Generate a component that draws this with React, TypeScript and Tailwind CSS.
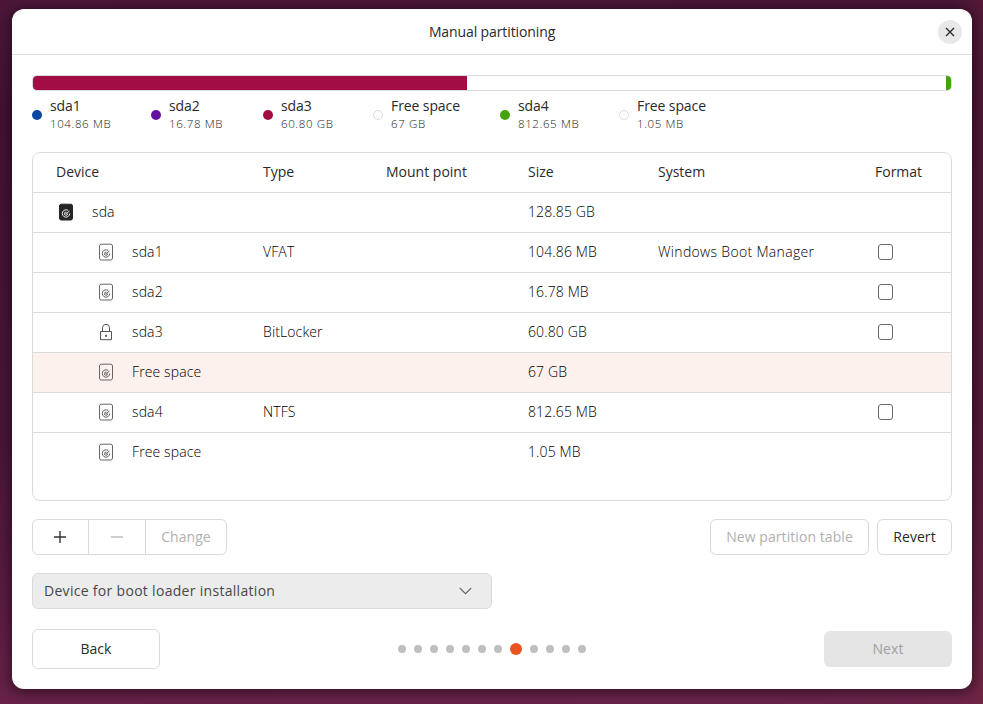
import React from "react";

const legend = [
  { name: "sda1", size: "104.86 MB", dot: "bg-[#0e46a3]", width: "w-[119px]" },
  { name: "sda2", size: "16.78 MB", dot: "bg-[#6610a0]", width: "w-[112px]" },
  { name: "sda3", size: "60.80 GB", dot: "bg-[#a30d46]", width: "w-[110px]" },
  { name: "Free space", size: "67 GB", dot: "border border-[#dadada] bg-white", width: "w-[127px]" },
  { name: "sda4", size: "812.65 MB", dot: "bg-[#46a30e]", width: "w-[119px]" },
  { name: "Free space", size: "1.05 MB", dot: "border border-[#dadada] bg-white", width: "w-[119px]" },
];

type Row = {
  icon: "disk" | "part" | "lock";
  name: string;
  type?: string;
  size: string;
  system?: string;
  format?: boolean;
  selected?: boolean;
};

const rows: Row[] = [
  { icon: "disk", name: "sda", size: "128.85 GB" },
  { icon: "part", name: "sda1", type: "VFAT", size: "104.86 MB", system: "Windows Boot Manager", format: true },
  { icon: "part", name: "sda2", size: "16.78 MB", format: true },
  { icon: "lock", name: "sda3", type: "BitLocker", size: "60.80 GB", format: true },
  { icon: "part", name: "Free space", size: "67 GB", selected: true },
  { icon: "part", name: "sda4", type: "NTFS", size: "812.65 MB", format: true },
  { icon: "part", name: "Free space", size: "1.05 MB" },
];

const grid = "grid grid-cols-[207px_123px_142px_130px_217px_1fr] pl-[23px] items-center";

function DriveIcon({ filled }: { filled?: boolean }) {
  const ink = filled ? "#fff" : "#505050";
  return (
    <svg width="20" height="20" viewBox="0 0 20 20" fill="none">
      <rect x="3.5" y="2.2" width="13" height="15.8" rx="1.8" fill={filled ? "#262626" : "none"} stroke={filled ? "#262626" : "#666"} strokeWidth="1" />
      <path d="M12.2 8.5 A3.7 3.7 0 1 0 13.7 11.5" stroke={ink} strokeWidth="0.9" />
      <path d="M11.6 11.6 A1.6 1.6 0 1 1 10.6 10.2 M9.6 11.5 H10.5 L13.4 9.1" stroke={ink} strokeWidth="0.9" />
    </svg>
  );
}

function LockIcon() {
  return (
    <svg width="20" height="20" viewBox="0 0 20 20" fill="none" stroke="#555" strokeWidth="1">
      <path d="M4.5 9.5 H15.5 V17.7 H4.5 Z" />
      <path d="M6.5 9.5 V5.8 A3.5 3.5 0 0 1 13.5 5.8 V9.5" />
      <rect x="9.3" y="12.8" width="1.5" height="2" fill="#333" stroke="none" />
    </svg>
  );
}

export default function App() {
  return (
    <div className="h-[704px] w-[983px] overflow-hidden bg-[linear-gradient(to_right,transparent_97%,rgba(125,45,50,0.2)),linear-gradient(178deg,#4d1639_0%,#431233_15%,#4a1538_60%,#5d1d43_85%,#6c2449_100%)] pl-3 pt-[9px] font-['Open_Sans','Noto_Sans',sans-serif] text-[14px] text-[#2a2a2a]">
      <div className="flex h-[680px] w-[960px] flex-col rounded-xl bg-white shadow-[0_2px_12px_2px_rgba(0,0,0,0.45)]">
        <header className="grid h-[46px] shrink-0 grid-cols-[1fr_auto_1fr] items-center border-b border-[#dedede] px-2.5">
          <span />
          <h1 className="pb-px tracking-[-0.11px]">Manual partitioning</h1>
          <button className="grid size-6 place-items-center justify-self-end rounded-full bg-[#e8e8e8]">
            <svg width="10" height="10" viewBox="0 0 10 10" stroke="#222" strokeWidth="1.2">
              <path d="M1 1 L9 9 M9 1 L1 9" />
            </svg>
          </button>
        </header>

        <main className="flex flex-1 flex-col px-5 pt-5">
          <div className="flex h-4 shrink-0 overflow-hidden rounded-[5px] border border-[#dadada]">
            <div className="w-[434px] bg-[#a30d46]" />
            <div className="flex-1" />
            <div className="w-[5px] bg-[#46a30e]" />
          </div>

          <div className="flex h-[61px] shrink-0 pt-[7px]">
            {legend.map((item, i) => (
              <div key={i} className={`flex h-[34px] items-center gap-2 ${item.width}`}>
                <span className={`size-2.5 rounded-full ${item.dot}`} />
                <div className="flex flex-col whitespace-nowrap">
                  <span className="h-[18px] leading-[16px] tracking-[-0.1px]">{item.name}</span>
                  <span className="h-[17px] text-[11.5px] font-light leading-[16px] tracking-[0.62px] text-[#222]">{item.size}</span>
                </div>
              </div>
            ))}
          </div>

          <section className="h-[349px] shrink-0 overflow-hidden rounded-lg border border-[#dadada]">
            <div className={`${grid} h-10 border-b border-[#dadada] pb-0.5 tracking-[0px]`}>
              <span>Device</span>
              <span>Type</span>
              <span>Mount point</span>
              <span>Size</span>
              <span>System</span>
              <span>Format</span>
            </div>
            {rows.map((row, i) => (
              <div
                key={i}
                className={`${grid} h-10 border-b pb-px font-light tracking-[0.12px] text-black ${i < rows.length - 1 ? "border-[#dadada]" : "border-transparent"} ${row.selected ? "bg-[#fdf1ed]" : ""}`}
              >
                <div className={`flex items-center gap-4 ${row.icon === "disk" ? "" : "pl-10"}`}>
                  {row.icon === "lock" ? <LockIcon /> : <DriveIcon filled={row.icon === "disk"} />}
                  <span className="pb-px">{row.name}</span>
                </div>
                <span className="pb-px">{row.type}</span>
                <span />
                <span className="pb-px">{row.size}</span>
                <span className="pb-px tracking-[0.32px]">{row.system}</span>
                {row.format ? <span className="ml-[3px] h-4 w-[15px] rounded-[3px] border border-[#6a6a6a]" /> : <span />}
              </div>
            ))}
          </section>

          <div className="mt-[18px] flex h-9 shrink-0 justify-between">
            <div className="flex w-[195px] divide-x divide-[#dadada] rounded-md border border-[#dadada]">
              <button className="grid w-14 place-items-center pr-px">
                <svg width="12" height="12" viewBox="0 0 12 12" stroke="#333" strokeWidth="1.4">
                  <path d="M0 6 H12 M6 0 V12" />
                </svg>
              </button>
              <button className="grid w-[57px] place-items-center">
                <svg width="12" height="12" viewBox="0 0 12 12" stroke="#b5b5b5" strokeWidth="1.3">
                  <path d="M0 6 H12" />
                </svg>
              </button>
              <button className="flex-1 pb-px tracking-[0.05px] text-[#b0b0b0]">Change</button>
            </div>
            <div className="flex gap-2">
              <button className="w-[159px] rounded-md border border-[#dadada] pb-px tracking-[0.07px] text-[#b0b0b0]">New partition table</button>
              <button className="w-[75px] rounded-md border border-[#dadada] pb-px tracking-[0.05px]">Revert</button>
            </div>
          </div>

          <button className="mt-[18px] flex h-9 w-[460px] shrink-0 items-center justify-between rounded-md border border-[#dadada] bg-[#ececec] pl-[11px] pr-[19px] tracking-[0.3px] text-[#484848]">
            <span className="pb-px">Device for boot loader installation</span>
            <svg width="13" height="8" viewBox="0 0 13 8" fill="none" stroke="#666" strokeWidth="1.1">
              <path d="M0.8 1 L6.5 6.7 L12.2 1" />
            </svg>
          </button>

          <footer className="mt-5 grid h-10 shrink-0 grid-cols-[128px_1fr_128px] items-center">
            <button className="h-10 rounded-md border border-[#dadada] pb-px">Back</button>
            <div className="flex items-center justify-center gap-2">
              {Array.from({ length: 12 }, (_, i) => (
                <span key={i} className={`rounded-full ${i === 7 ? "size-3 bg-[#e95420]" : "size-2 bg-[#bfbfbf]"}`} />
              ))}
            </div>
            <button className="h-9 rounded-md bg-[#e5e5e5] pb-px tracking-[0.1px] text-[#a0a0a0]">Next</button>
          </footer>
        </main>
      </div>
    </div>
  );
}
